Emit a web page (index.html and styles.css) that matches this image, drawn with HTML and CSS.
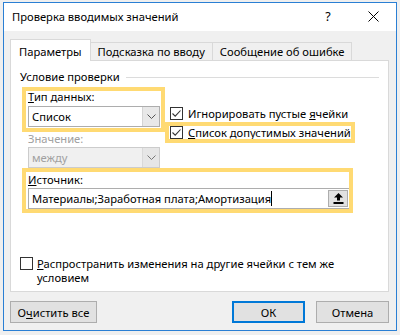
FILE: index.html
```html
<!DOCTYPE html>
<html lang="ru">
<head>
<meta charset="utf-8">
<title>Проверка вводимых значений</title>
<link rel="stylesheet" href="styles.css">
</head>
<body>
<div class="dialog">
  <div class="titlebar">
    <span class="title">Проверка вводимых значений</span>
    <span class="help">?</span>
    <span class="close"><svg width="11" height="11" viewBox="0 0 11 11"><path d="M0.5 0.5 L10.5 10.5 M10.5 0.5 L0.5 10.5" stroke="#000" stroke-width="1" fill="none"/></svg></span>
  </div>
  <div class="body">
    <div class="tabs">
      <div class="tab active">Параметры</div>
      <div class="tab">Подсказка по вводу</div>
      <div class="tab">Сообщение об ошибке</div>
    </div>
    <div class="panel">
      <div class="legend"><span>Условие проверки</span><span class="rule"></span></div>
      <div class="group">
        <div class="row-top">
          <div class="col-left">
            <div class="lbl"><u>Т</u>ип данных:</div>
            <div class="combo">
              <span class="val">Список</span>
              <span class="arrow"><svg width="9" height="5" viewBox="0 0 9 5"><path d="M0.5 0.5 L4.5 4.5 L8.5 0.5" stroke="#555" stroke-width="1" fill="none"/></svg></span>
            </div>
            <div class="lbl dis">Значение:</div>
            <div class="combo dis">
              <span class="val">между</span>
              <span class="arrow"><svg width="9" height="5" viewBox="0 0 9 5"><path d="M0.5 0.5 L4.5 4.5 L8.5 0.5" stroke="#777" stroke-width="1" fill="none"/></svg></span>
            </div>
          </div>
          <div class="col-right">
            <div class="chk">
              <span class="box"><svg width="11" height="11" viewBox="0 0 11 11"><path d="M1.5 5.5 L4.2 8.2 L9.5 2.5" stroke="#333" stroke-width="1.1" fill="none"/></svg></span>
              <span>Игнорировать пустые <u>я</u>чейки</span>
            </div>
            <div class="chk">
              <span class="box"><svg width="11" height="11" viewBox="0 0 11 11"><path d="M1.5 5.5 L4.2 8.2 L9.5 2.5" stroke="#333" stroke-width="1.1" fill="none"/></svg></span>
              <span><u>С</u>писок допустимых значений</span>
            </div>
          </div>
        </div>
        <div class="lbl src-lbl"><u>И</u>сточник:</div>
        <div class="source">
          <span class="stext">Материалы;Заработная плата;Амортизация</span><span class="caret"></span>
          <span class="ref-btn"><svg width="11" height="11" viewBox="0 0 11 11"><path d="M5.5 0 L10 4.6 L7 4.6 L7 7.6 L4 7.6 L4 4.6 L1 4.6 Z" fill="#000"/><rect x="0.5" y="9" width="10" height="2" fill="#000"/></svg></span>
        </div>
      </div>
      <div class="chk wide">
        <span class="box"></span>
        <div class="wtext">
          <div class="wline"><u>Р</u>аспространить изменения на другие ячейки с тем же</div>
          <div class="wline">условием</div>
        </div>
      </div>
      <div class="hl hl1"></div>
      <div class="hl hl2"></div>
      <div class="hl hl3"></div>
    </div>
    <div class="buttons">
      <button class="btn clear">О<u>ч</u>истить все</button>
      <span class="spacer"></span>
      <button class="btn ok">ОК</button>
      <button class="btn cancel">Отмена</button>
    </div>
  </div>
</div>
</body>
</html>
```
FILE: styles.css
```css
* { box-sizing: border-box; }
html, body { margin: 0; padding: 0; }
body {
  width: 400px;
  height: 335px;
  overflow: hidden;
  background: #efefef;
  font-family: "Noto Sans", "Open Sans", sans-serif;
  font-size: 11.2px;
  color: #000;
  padding-top: 2px;
  padding-left: 3px;
}
u { text-decoration: underline; text-underline-offset: 1px; }
.dialog {
  width: 394px;
  border: 1px solid #2a7fd4;
  background: #f0f0f0;
}
.titlebar {
  height: 28px;
  background: #fff;
  display: flex;
  align-items: center;
  padding-left: 8px;
  padding-bottom: 2px;
}
.title { flex: 1; }
.help { width: 12px; text-align: center; margin-right: 34px; font-size: 12.5px; }
.close { width: 11px; height: 11px; margin-right: 17px; display: flex; }
.body {
  padding: 8px 7px 7px 6px;
}
.tabs {
  display: flex;
  align-items: flex-end;
  margin-bottom: -1px;
  position: relative;
  z-index: 1;
}
.tab {
  height: 19px;
  line-height: 17px;
  padding: 0 7px;
  border: 1px solid #d9d9d9;
  background: #f0f0f0;
  margin-left: -1px;
}
.tab.active {
  margin-left: 0;
  height: 22px;
  line-height: 24px;
  padding: 0 8px;
  background: #fff;
  border-bottom: none;
}
.panel {
  position: relative;
  height: 232px;
  background: #fff;
  border: 1px solid #d9d9d9;
  padding: 8px 9px 0 9px;
}
.legend {
  display: flex;
  align-items: center;
  height: 16px;
  line-height: 16px;
}
.rule { flex: 1; height: 1px; background: #dcdcdc; margin-left: 6px; }
.group { margin-left: 8px; margin-top: 4px; }
.row-top { display: flex; }
.col-left { width: 132px; }
.col-right { margin-left: 10px; padding-top: 15px; }
.lbl { height: 16px; line-height: 16px; }
.lbl.dis { color: #a0a0a0; margin-top: 4px; }
.combo {
  margin-top: 1px;
  height: 21px;
  border: 1px solid #adadad;
  background: #fff;
  display: flex;
  align-items: center;
}
.combo .val { flex: 1; padding-left: 3px; }
.combo .arrow {
  width: 17px;
  height: 100%;
  background: #e8e8e8;
  border-left: 1px solid #d4d4d4;
  display: flex;
  align-items: center;
  justify-content: center;
}
.combo.dis { margin-top: 0; background: #f0f0f0; border-color: #cccccc; color: #a0a0a0; }
.combo.dis .arrow { background: #e6e6e6; border-left-color: #d9d9d9; }
.chk {
  display: flex;
  align-items: center;
  height: 19px;
  gap: 5px;
}
.box {
  width: 13px;
  height: 13px;
  flex: none;
  border: 1px solid #333;
  background: #fff;
  display: flex;
  align-items: center;
  justify-content: center;
}
.src-lbl { margin-top: 4px; }
.source {
  width: 322px;
  height: 21px;
  border: 1px solid #adadad;
  background: #fff;
  display: flex;
  align-items: center;
  padding-left: 3px;
  padding-right: 1px;
}
.stext { white-space: nowrap; }
.caret { width: 1px; height: 15px; background: #000; }
.ref-btn {
  margin-left: auto;
  width: 20px;
  height: 17px;
  background: #e1e1e1;
  border: 1px solid #adadad;
  display: flex;
  align-items: center;
  justify-content: center;
}
.chk.wide {
  margin-top: 47px;
  height: auto;
  align-items: flex-start;
  gap: 4px;
}
.chk.wide .box { margin-top: 1px; }
.wline { height: 14px; line-height: 15px; white-space: nowrap; }
.hl {
  position: absolute;
  border: 4px solid #ffda73;
  pointer-events: none;
}
.hl1 { left: 11px; top: 26px; width: 143px; height: 45px; }
.hl2 { left: 154px; top: 61px; width: 190px; height: 21px; }
.hl3 { left: 11px; top: 107px; width: 331px; height: 45px; }
.buttons {
  display: flex;
  margin-top: 9px;
  height: 22px;
}
.spacer { flex: 1; }
.btn {
  font-family: inherit;
  font-size: 11.2px;
  color: #000;
  background: #e1e1e1;
  border: 1px solid #adadad;
  padding: 0;
  height: 22px;
  width: 73px;
}
.btn.clear { width: 87px; }
.btn.ok { border: 2px solid #0078d7; }
.btn.cancel { margin-left: 11px; }
```
